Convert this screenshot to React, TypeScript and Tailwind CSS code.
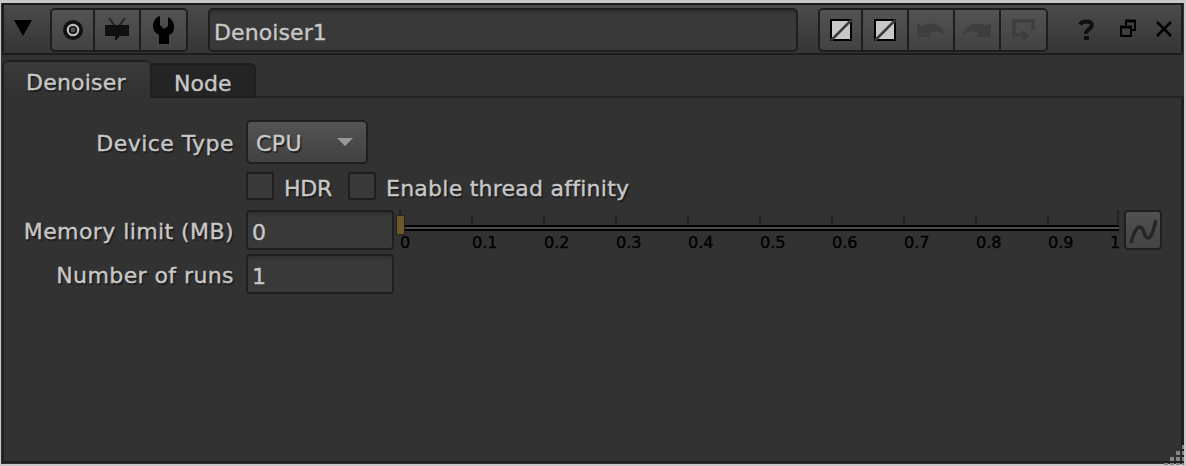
import type { ReactNode } from "react";

const ticks = ["0", "0.1", "0.2", "0.3", "0.4", "0.5", "0.6", "0.7", "0.8", "0.9"];

function Tool({ children, width }: { children: ReactNode; width: string }) {
  return (
    <button
      className={
        "flex h-full shrink-0 items-center justify-center border-[#1e1e1e] bg-linear-to-b from-[#535353] to-[#424242] " +
        width
      }
    >
      {children}
    </button>
  );
}

function SlashBox() {
  return (
    <svg width="22" height="22" viewBox="0 0 22 22">
      <rect x="1" y="1" width="20" height="20" fill="#c8c8c8" stroke="#000" strokeWidth="2" />
      <path d="M1 21.5 21.5 1" stroke="#3a3a3a" strokeWidth="2.6" />
    </svg>
  );
}

function Label({ children }: { children: ReactNode }) {
  return (
    <div className="w-[234px] shrink-0 whitespace-nowrap text-right [text-shadow:1.5px_1.5px_1px_#1c1c1c]">
      {children}
    </div>
  );
}

function NumberBox({ value }: { value: string }) {
  return (
    <div className="ml-3 flex h-10 w-[148px] shrink-0 items-center rounded-[4px] border-2 border-[#1f1f1f] bg-linear-to-b from-[#303030] via-[#393939] via-15% to-[#393939] pt-1.5 pl-1">
      {value}
    </div>
  );
}

function Check() {
  return <div className="size-7 shrink-0 rounded-[2px] border-2 border-[#1f1f1f] bg-[#393939]" />;
}

export default function App() {
  return (
    <div className="flex h-[466px] w-[1186px] flex-col overflow-hidden bg-[#323232] pt-[3px] font-['DejaVu_Sans',sans-serif] text-[22px] leading-[26px] text-[#c8c8c8] shadow-[inset_0_3px_#c8c8c8,inset_1px_0_#c8c8c8,inset_-2px_0_#c8c8c8,inset_0_-2px_#c8c8c8] [-webkit-text-stroke:0.35px]">
      <header className="ml-[2px] flex h-[52px] w-[1181px] shrink-0 items-center border-2 border-t-[2px] border-[#1d1d1d] bg-linear-to-b from-[#4b4b4b] to-[#353535] pt-px pl-2.5">
        <svg className="mb-1 shrink-0" width="18" height="16" viewBox="0 0 18 16">
          <path d="M0 0h18L9 16Z" fill="#000" />
        </svg>
        <div className="ml-[18px] flex h-11 w-[138px] shrink-0 overflow-hidden rounded-[5px] border-2 border-[#1e1e1e]">
          <Tool width="w-[43px] border-r-2">
            <svg width="20" height="20" viewBox="0 0 20 20">
              <circle cx="10" cy="10" r="10" fill="#111" />
              <circle cx="10" cy="10" r="5.2" fill="none" stroke="#bcbcbc" strokeWidth="2.2" />
              <circle cx="10" cy="10" r="2.4" fill="#555" />
            </svg>
          </Tool>
          <Tool width="w-[46px] border-r-2">
            <svg width="26" height="24" viewBox="0 0 26 24" className="mb-1">
              <path d="M5 2 11 10M21 2 15 10" stroke="#242424" strokeWidth="2" />
              <path d="M1 9h24v11H15v2h-2v2h-2v-4H1Z" fill="#101010" />
            </svg>
          </Tool>
          <Tool width="w-[45px]">
            <svg width="24" height="30" viewBox="0 0 24 30">
              <path d="M8 1v9l4 4 4-3V2c4 2 7 7 6 12-1 4-3 5-5 6v9H7v-9c-4-2-6-5-6-9C1 6 4 2 8 1Z" fill="#000" />
            </svg>
          </Tool>
        </div>
        <div className="ml-5 flex h-11 w-[590px] shrink-0 items-center rounded-[5px] border-2 border-[#1f1f1f] bg-linear-to-b from-[#303030] via-[#393939] via-15% to-[#393939] pt-1.5 pl-1 tracking-[0.1px]">
          Denoiser1
        </div>
        <div className="ml-5 flex h-11 w-[230px] shrink-0 overflow-hidden rounded-[5px] border-2 border-[#1e1e1e]">
          <Tool width="w-[43px] border-r-2"><SlashBox /></Tool>
          <Tool width="w-[46px] border-r-2"><SlashBox /></Tool>
          <Tool width="w-[46px] border-r-2">
            <svg width="28" height="16" viewBox="0 0 28 16">
              <path d="M0 1 5 4C14-1 24 1 28 13c-5-4-11-5-15-2l1 4H0Z" fill="#3e3e3e" />
            </svg>
          </Tool>
          <Tool width="w-[46px] border-r-2">
            <svg width="28" height="16" viewBox="0 0 28 16">
              <path d="M28 1 23 4C14-1 4 1 0 13c5-4 11-5 15-2l-1 4h14Z" fill="#3e3e3e" />
            </svg>
          </Tool>
          <Tool width="w-[45px]">
            <svg width="24" height="22" viewBox="0 0 24 22">
              <path d="M10 16H2V2h19v9" fill="none" stroke="#3e3e3e" strokeWidth="3.5" />
              <path d="M9 11l8 5-5 6-3-3Z" fill="#3e3e3e" />
            </svg>
          </Tool>
        </div>
        <svg className="ml-[30px] shrink-0" width="18" height="22" viewBox="0 0 18 22">
          <path d="M2 5.5C4 2 13 1 14 6c0 4-6 4-6 9" fill="none" stroke="#101010" strokeWidth="4" />
          <path d="M6 17h5v4H6z" fill="#101010" />
        </svg>
        <svg className="mb-0.5 ml-6 shrink-0" width="17" height="19" viewBox="0 0 17 19">
          <path d="M6 6V2H15v9h-4M1 8h10v9H1Z" fill="none" stroke="#000" strokeWidth="2" />
          <path d="M5 2h11M0 8h12" stroke="#000" strokeWidth="3" />
        </svg>
        <svg className="mb-0.5 ml-[19px] shrink-0" width="16" height="16" viewBox="0 0 16 16">
          <path d="m1 1 14 14M15 1 1 15" stroke="#000" strokeWidth="2.6" />
        </svg>
      </header>

      <nav className="mt-[5px] ml-[2px] flex h-[38px] shrink-0 items-end">
        <div className="flex h-[38px] w-[150px] items-center rounded-t-[6px] border-2 border-b-0 border-[#202020] bg-linear-to-b from-[#393939] to-[#323232] pt-1.5 pl-[22px] tracking-[0.2px] [text-shadow:1.5px_1.5px_1px_#1c1c1c]">
          Denoiser
        </div>
        <div className="flex h-[35px] w-[104px] items-center rounded-tr-[6px] border-t-2 border-r-2 border-b-2 border-[#1e1e1e] bg-[#242424] pt-[7px] pl-[22px]">
          Node
        </div>
        <div className="h-0.5 w-[928px] bg-[#222222]" />
      </nav>

      <main className="relative ml-[2px] flex h-[365px] w-[1182px] shrink-0 flex-col border-r-[3px] border-b-2 border-l-2 border-[#202020] pt-[22px]">
        <div className="-ml-1 flex h-11 items-center">
          <div className="pt-1 tracking-[0.45px]"><Label>Device Type</Label></div>
          <div className="ml-3 flex h-11 w-[122px] items-center justify-between rounded-[5px] border-2 border-[#1f1f1f] bg-linear-to-b from-[#535353] to-[#424242] pt-1 pr-[13px] pl-2 tracking-[0.4px] [text-shadow:1.5px_1.5px_1px_#1c1c1c]">
            CPU
            <svg width="16" height="8" viewBox="0 0 16 8" className="mb-1">
              <path d="M0 0h16L8 8Z" fill="#999" />
            </svg>
          </div>
        </div>
        <div className="mt-2 ml-[242px] flex h-7 items-center [text-shadow:1.5px_1.5px_1px_#1c1c1c]">
          <Check />
          <span className="ml-2.5 w-16 pt-1.5 tracking-[-0.2px]">HDR</span>
          <Check />
          <span className="ml-2.5 pt-1.5 tracking-[0.25px]">Enable thread affinity</span>
        </div>
        <div className="mt-2.5 -ml-1 flex h-10 items-center">
          <div className="pt-1 tracking-[0.42px]"><Label>Memory limit (MB)</Label></div>
          <NumberBox value="0" />
          <div className="ml-0.5 flex h-10 w-[724px] shrink-0 flex-col">
            <svg width="724" height="25" viewBox="0 0 724 25" className="shrink-0">
              {ticks.map((t, i) => (
                <path key={t} d={`M${4 + i * 72} ${i ? 5 : 0}v10`} stroke="#222" strokeWidth="2" />
              ))}
              <path d="M722 0v15" stroke="#222" strokeWidth="2" />
              <path d="M4 16h719M4 20h719" stroke="#000" strokeWidth="2" />
              <path d="M4 18h719" stroke="#4b4b4b" strokeWidth="2" />
              <path d="M0.5 5.5h8v19h-8Z" fill="#6b572a" stroke="#252218" />
            </svg>
            <div className="flex pl-[4px] text-[16px] leading-[16px] text-black">
              {ticks.map((t) => (
                <span key={t} className="w-[72px] shrink-0">{t}</span>
              ))}
              <span className="-ml-[10px]">1</span>
            </div>
          </div>
          <button className="ml-1 flex h-10 w-[38px] shrink-0 items-center justify-center rounded-[4px] border-2 border-[#1f1f1f] bg-linear-to-b from-[#515151] to-[#444444]">
            <svg width="30" height="30" viewBox="0 0 30 30">
              <path d="M3 28C5 20 8 12 12 12c5 0 3 11 8 11 4 0 6-10 8-18" fill="none" stroke="#282426" strokeWidth="3.4" />
            </svg>
          </button>
        </div>
        <div className="mt-1 -ml-1 flex h-10 items-center">
          <div className="pt-1 tracking-[0.42px]"><Label>Number of runs</Label></div>
          <NumberBox value="1" />
        </div>
        <svg className="absolute -right-[3px] -bottom-[4px]" width="20" height="20" viewBox="0 0 20 20">
          <path d="M18 0h2v4h-2zM12 6h4v4h-4zM18 6h2v4h-2zM6 12h4v4H6zM12 12h4v4h-4zM18 12h2v4h-2zM0 18h4v2H0zM6 18h4v2H6zM12 18h4v2h-4zM18 18h2v2h-2z" fill="#858585" />
        </svg>
      </main>
    </div>
  );
}
